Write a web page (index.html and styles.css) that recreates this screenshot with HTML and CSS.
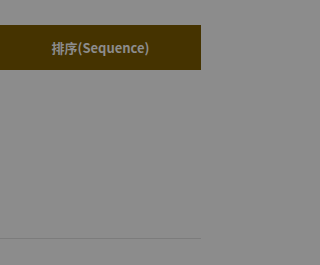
FILE: index.html
```html
<!DOCTYPE html>
<html>
<head>
<meta charset="utf-8">
<link rel="stylesheet" href="styles.css">
</head>
<body>
<div class="page">
  <div class="top-space"></div>
  <div class="header">排序(Sequence)</div>
  <div class="content"></div>
  <div class="footer"></div>
</div>
</body>
</html>
```
FILE: styles.css
```css
html, body {
  margin: 0;
  padding: 0;
  background: #8c8c8c;
}
.page {
  width: 201px;
  height: 265px;
  display: flex;
  flex-direction: column;
}
.top-space {
  height: 25px;
}
.header {
  height: 45px;
  background: #453300;
  color: #8c8c8c;
  font-family: "Noto Sans CJK SC", "Noto Sans", sans-serif;
  font-weight: 700;
  font-size: 13px;
  display: flex;
  align-items: center;
  justify-content: center;
}
.content {
  height: 168px;
}
.footer {
  flex: 1;
  border-top: 1px solid #7c7c7c;
}
```
